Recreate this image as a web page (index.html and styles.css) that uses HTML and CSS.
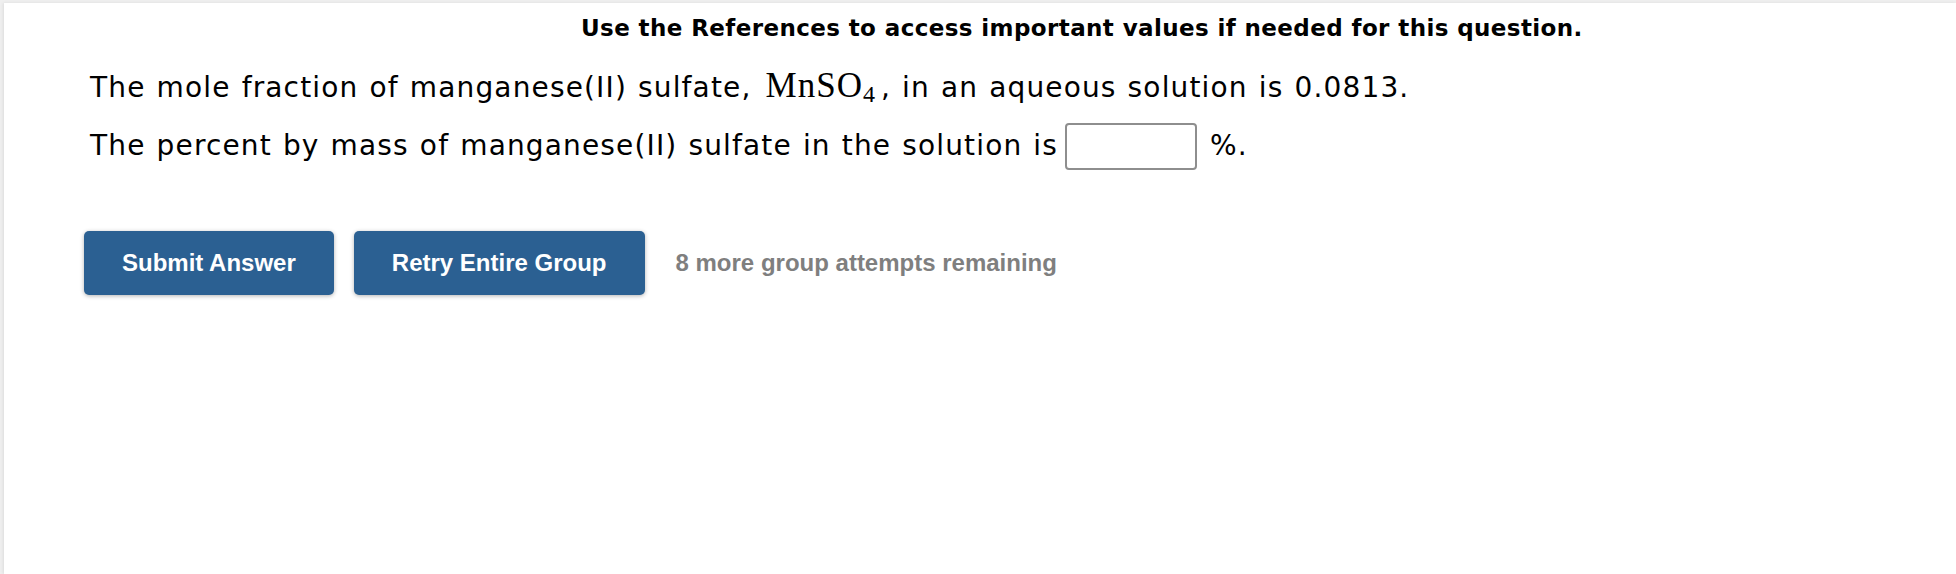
FILE: index.html
```html
<!DOCTYPE html>
<html lang="en">
<head>
<meta charset="utf-8">
<title>Question</title>
<link rel="stylesheet" href="styles.css">
</head>
<body>
<div class="panel">
  <div class="refs">Use the References to access important values if needed for this question.</div>
  <div class="content">
    <div class="qtext">
      <p class="line line1">The mole fraction of manganese(II) sulfate, <span class="math">MnSO<sub>4</sub></span>, in an aqueous solution is 0.0813.</p>
      <p class="line line2">The percent by mass of manganese(II) sulfate in the solution is<input class="answer" type="text" aria-label="answer"> %.</p>
    </div>
    <div class="actions">
      <button class="btn" type="button">Submit Answer</button>
      <button class="btn" type="button">Retry Entire Group</button>
      <span class="attempts">8 more group attempts remaining</span>
    </div>
  </div>
</div>
</body>
</html>
```
FILE: styles.css
```css
html, body {
  margin: 0;
  padding: 0;
  background: #efefef;
}
.panel {
  margin: 3px 0 0 4px;
  background: #ffffff;
  min-height: 571px;
  box-shadow: -1px 0 3px rgba(0,0,0,0.08);
}
.refs {
  padding: 12px 0 0 577px;
  font-family: "DejaVu Sans", Verdana, sans-serif;
  font-weight: bold;
  font-size: 23px;
  letter-spacing: 0.4px;
  line-height: 26px;
  color: #000;
  white-space: nowrap;
}
.content {
  padding-left: 80px;
}
.qtext {
  padding-left: 6px;
  font-family: "DejaVu Sans", Verdana, sans-serif;
  font-size: 28px;
  letter-spacing: 1.15px;
  word-spacing: 1px;
  color: #000;
}
.line {
  margin: 0;
  line-height: 40px;
  white-space: nowrap;
}
.line1 {
  margin-top: 25px;
}
.line2 {
  margin-top: 15px;
}
.math {
  font-family: "Liberation Serif", "Times New Roman", serif;
  font-size: 35px;
  letter-spacing: 1px;
  margin: 0 2px 0 3px;
}
.math sub {
  font-size: 24px;
  vertical-align: -5px;
  line-height: 0;
  margin-right: 3px;
}
.answer {
  width: 128px;
  height: 43px;
  box-sizing: content-box;
  padding: 0;
  margin: 0 2px 0 7px;
  border: 2px solid #8e8e8e;
  border-radius: 4px;
  vertical-align: middle;
  background: #fff;
}
.actions {
  display: flex;
  align-items: center;
  gap: 20px;
  margin-top: 61px;
}
.btn {
  height: 64px;
  padding: 0 38px;
  border: none;
  border-radius: 5px;
  background: #2b6092;
  color: #fff;
  font-family: "Liberation Sans", Arial, sans-serif;
  font-weight: bold;
  font-size: 24px;
  box-shadow: 0 1px 4px rgba(0,0,0,0.3);
}
.attempts {
  margin-left: 11px;
  font-family: "Liberation Sans", Arial, sans-serif;
  font-weight: bold;
  font-size: 24px;
  color: #7f7f7f;
}
```
